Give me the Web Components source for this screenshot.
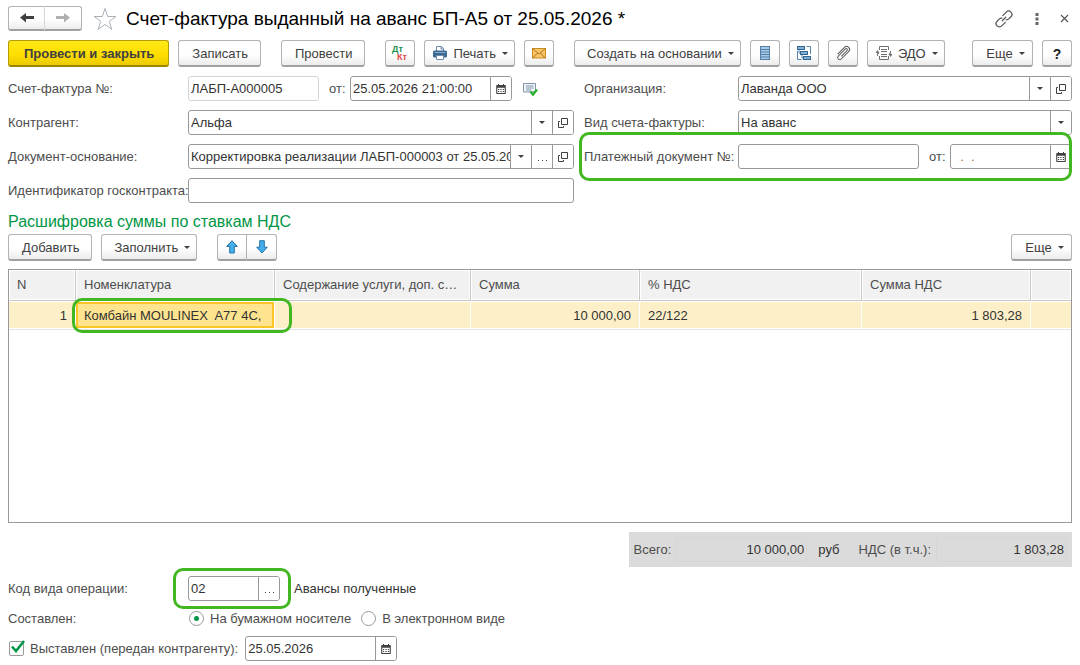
<!DOCTYPE html>
<html lang="ru">
<head>
<meta charset="utf-8">
<meta name="viewport" content="width=device-width, initial-scale=1">
<title>Счет-фактура выданный на аванс</title>
<style>
  * { box-sizing: border-box; }
  body {
    margin: 0;
    padding: 6px 8px 4px;
    min-height: 100vh;
    display: flex;
    flex-direction: column;
    gap: 9px;
    background: #fff;
    color: #4d4d4d;
    font: 13px/16px "Liberation Sans", Arial, sans-serif;
  }
  .row { display: flex; align-items: center; gap: 9px; }
  .pair { display: flex; }
  .push { margin-left: auto; }
  .group { margin-left: 11px; }
  .columns { display: grid; grid-template-columns: 566fr 488fr; gap: 10px; align-items: start; }
  .column { display: flex; flex-direction: column; gap: 9px; }
  .fields { display: flex; align-items: center; gap: 10px; }
  .grow { flex: 1; }
  .left { --label: 180px; }
  .right { --label: 154px; }
  .short { --label: 21px; }
  h2 { margin: 0 0 -7px; font-size: 16px; line-height: 20px; font-weight: normal; color: #009646; }
  .dark { color: #333; }
  totals-bar { align-self: flex-end; }
</style>
</head>
<body>
  <window-title>Счет-фактура выданный на аванс БП-А5 от 25.05.2026 *</window-title>

  <div class="row">
    <ui-button kind="primary">Провести и закрыть</ui-button>
    <ui-button>Записать</ui-button>
    <ui-button class="group">Провести</ui-button>
    <ui-button class="group" icon="dtkt" kind="square" hint="Дт/Кт"></ui-button>
    <ui-button icon="print" menu>Печать</ui-button>
    <ui-button icon="mail" kind="square" hint="Отправить"></ui-button>
    <ui-button class="group" menu>Создать на основании</ui-button>
    <ui-button icon="list" kind="square" hint="Список"></ui-button>
    <ui-button icon="tree" kind="square" hint="Структура"></ui-button>
    <ui-button icon="clip" kind="square" hint="Файлы"></ui-button>
    <ui-button icon="edo" menu>ЭДО</ui-button>
    <ui-button class="push" menu>Еще</ui-button>
    <ui-button kind="square help">?</ui-button>
  </div>

  <div class="columns">
    <div class="column left">
      <div class="fields">
        <ui-field label="Счет-фактура №:" value="ЛАБП-А000005" size="131" readonly></ui-field>
        <ui-field class="short" label="от:" value="25.05.2026 21:00:00" size="162" buttons="calendar"></ui-field>
        <ui-icon name="status"></ui-icon>
      </div>
      <ui-field label="Контрагент:" value="Альфа" buttons="drop open"></ui-field>
      <ui-field label="Документ-основание:" value="Корректировка реализации ЛАБП-000003 от 25.05.20" buttons="drop dots open"></ui-field>
      <ui-field label="Идентификатор госконтракта:"></ui-field>
    </div>
    <div class="column right">
      <ui-field label="Организация:" value="Лаванда ООО" buttons="drop open"></ui-field>
      <ui-field label="Вид счета-фактуры:" value="На аванс" buttons="drop"></ui-field>
      <mark-ring style="--inset: -12px 0 -12px -5px">
        <div class="fields">
          <ui-field class="grow" label="Платежный документ №:"></ui-field>
          <ui-field class="short" label="от:" value="  .  .    " size="122" buttons="calendar" mask></ui-field>
        </div>
      </mark-ring>
    </div>
  </div>

  <h2>Расшифровка суммы по ставкам НДС</h2>
  <div class="row">
    <ui-button>Добавить</ui-button>
    <ui-button menu>Заполнить</ui-button>
    <div class="pair group">
      <ui-button icon="up" kind="square first" hint="Вверх"></ui-button>
      <ui-button icon="down" kind="square last" hint="Вниз"></ui-button>
    </div>
    <ui-button class="push" menu>Еще</ui-button>
  </div>

  <vat-table></vat-table>
  <totals-bar></totals-bar>

  <div class="fields left">
    <operation-code label="Код вида операции:"></operation-code>
    <span class="dark">Авансы полученные</span>
  </div>
  <choice-group label="Составлен:"></choice-group>
  <div class="fields">
    <check-box>Выставлен (передан контрагенту):</check-box>
    <ui-field value="25.05.2026" size="152" buttons="calendar" hint="Дата выставления"></ui-field>
  </div>

<script>
const ICONS = {
  back: [16, 12, '<path d="M7 1v3h8v3H7v3.500L1 5.500z" fill="#404040"/>'],
  forward: [16, 12, '<path d="M9 1v3H1v3h8v3.500l6-5z" fill="#b0b0b0"/>'],
  star: [24, 24, '<path d="M12 1.500l2.700 8h8.100l-6.500 4.900 2.500 7.900-6.800-4.800-6.800 4.800 2.500-7.900L1.200 9.500h8.100z" fill="none" stroke="#a9b0b8"/>'],
  link: [18, 16, '<g transform="rotate(-45 8 8)" fill="none" stroke="#555" stroke-width="1.200" stroke-linecap="round"><path d="M6.500 11.300H1.500a3.300 3.300 0 0 1 0-6.600h3a3.300 3.300 0 0 1 2.500 1.200"/><path d="M9.500 4.700h5a3.300 3.300 0 0 1 0 6.600h-3a3.300 3.300 0 0 1-2.500-1.200"/><path d="M5.500 8h5"/></g>'],
  more: [4, 12, '<path d="M.5 0h3v3h-3zM.5 4.500h3v3h-3zM.5 9h3v3h-3z" fill="#666"/>'],
  close: [9, 9, '<path d="M1 1l7 7M8 1L1 8" stroke="#555" stroke-width="1.200"/>'],
  dtkt: [18, 18, '<g font-family="Liberation Sans" font-size="9" font-weight="bold"><text x="1" y="8" fill="#1c9150">Дт</text><text x="6" y="16" fill="#e5484d">Кт</text></g>'],
  print: [14, 14, '<path d="M3.500 5V.5h5L10.500 2.500V5" fill="#fff" stroke="#6f8ba8"/><path d="M8 .5v2.500h2.500" fill="none" stroke="#6f8ba8"/><rect y="4.500" width="14" height="7" rx="1.500" fill="#3d6a95"/><path d="M1.500 6.500h11" stroke="#86a9c8"/><path d="M3.500 9.500h7v4h-7z" fill="#fff" stroke="#6f8ba8"/>'],
  mail: [14, 12, '<rect x=".5" y="1.500" width="13" height="9.500" fill="#f6c469" stroke="#c98a22"/><path d="M1 2l6 5 6-5M1 11l4.500-5M13 11L8.500 6" fill="none" stroke="#b97816"/>'],
  list: [10, 14, '<rect x=".5" y=".5" width="9" height="13" fill="#a9cbe6" stroke="#537fa6"/><path d="M1 3.500h8M1 6h8M1 8.500h8M1 11h8" stroke="#537fa6"/>'],
  tree: [14, 14, '<g fill="#7fb0d8" stroke="#34658f"><rect x=".5" y=".5" width="7" height="3"/><rect x="3.500" y="5.500" width="7" height="3"/><rect x="6.500" y="10.500" width="7" height="3"/></g><path d="M9.500.5h4V8M.5 5v8.500h4M2 4v3h1M5 9v3h1" fill="none" stroke="#5685ad"/>'],
  clip: [14, 14, '<path transform="rotate(-45 7 7)" d="M2.500 4H12a3 3 0 0 1 0 6H1.500a2.100 2.100 0 0 1 0-4.200H11.500a1.200 1.200 0 0 1 0 2.400H3.500" fill="none" stroke="#5a5a5a"/>'],
  edo: [16, 14, '<g fill="none" stroke="#707070"><path d="M3.500 4V.5h9V4M3.500 10v3.500h9V10"/><path d="M5 3.500h6M5 5.500h6M5 8.500h6M5 10.500h6"/><path d="M3 7.500H1.500V10M13 7.500h1.500V5"/></g><path d="M-.5 7L1.500 4l2 3zM12.500 8l2 3 2-3z" fill="#707070"/>'],
  up: [12, 14, '<path d="M6 .7L11.300 6.500H8.300v6.500H3.700V6.500H.7z" fill="#45aeea" stroke="#2173a8"/>'],
  down: [12, 14, '<path d="M6 13L11.300 7.200H8.300V.7H3.700v6.500H.7z" fill="#45aeea" stroke="#2173a8"/>'],
  status: [16, 14, '<path d="M1.500 1.500h12v8.500h-12z" fill="#eef4fa" stroke="#8493a8"/><path d="M4 4h7.500M4 6h7.500M4 8h5" stroke="#8493a8"/><path d="M8.500 9.500l2.500 3 4-5" fill="none" stroke="#2eb135" stroke-width="2.500"/>'],
  calendar: [10, 10, '<path d="M1 1h8a.8.8 0 0 1 .8.8V9.200a.8.8 0 0 1-.8.8H1a.8.8 0 0 1-.8-.8V1.800A.8.8 0 0 1 1 1zM1.300 3.800V9h7.400V3.800z" fill="#404040" fill-rule="evenodd"/><path d="M2.500 0v2M7.500 0v2" stroke="#404040"/><path d="M2 5.500h1.200m1.200 0h1.200m1.200 0H8M2 7.500h1.200m1.200 0h1.200m1.200 0H8" stroke="#404040"/>'],
  open: [10, 10, '<path d="M3.500.5h6v6h-6zM2 3.500H.5v6h5V8" fill="none" stroke="#404040"/>'],
  drop: [6, 3, '<path d="M0 0h6L3 3z" fill="#404040"/>'],
  dots: [9, 10, '<path d="M0 8h1v1H0zM4 8h1v1H4zM8 8h1v1H8z" fill="#404040"/>']
};

const HINTS = { calendar: "Выбрать дату", open: "Открыть", drop: "Выбрать из списка", dots: "Показать все" };

// shared by everything that draws a text box with its inner buttons
const FIELD_STYLE = `
  * { box-sizing: border-box; }
  .box {
    display: flex;
    flex: 1;
    min-width: 0;
    height: 25px;
    border: 1px solid #999;
    border-radius: 3px;
    background: #fff;
    overflow: hidden;
  }
  .box.readonly { border-color: #d4d4d4; }
  input {
    flex: 1;
    min-width: 0;
    width: 100%;
    border: 0;
    outline: 0;
    padding: 0 0 0 2px;
    background: transparent;
    color: #333;
    font: inherit;
  }
  .box button {
    flex: none;
    width: 21px;
    padding: 0;
    border: 0;
    border-left: 1px solid #999;
    background: #fff;
    display: flex;
    align-items: center;
    justify-content: center;
  }
`;

function fieldButtons(names) {
  return names.split(" ").filter(Boolean).map((name) =>
    `<button type="button" aria-label="${HINTS[name]}"><ui-icon name="${name}"></ui-icon></button>`).join("");
}

class UiIcon extends HTMLElement {
  constructor() {
    super();
    this.attachShadow({ mode: "open" });
  }
  connectedCallback() {
    const [w, h, body] = ICONS[this.getAttribute("name")];
    this.shadowRoot.innerHTML = `
      <style>
        :host { display: inline-flex; flex: none; }
        svg { display: block; overflow: visible; }
      </style>
      <svg width="${w}" height="${h}" viewBox="0 0 ${w} ${h}" aria-hidden="true">${body}</svg>
    `;
  }
}
customElements.define("ui-icon", UiIcon);

class UiButton extends HTMLElement {
  constructor() {
    super();
    this.attachShadow({ mode: "open" });
  }
  connectedCallback() {
    const icon = this.getAttribute("icon");
    const hint = this.getAttribute("hint");
    const menu = this.hasAttribute("menu");
    this.shadowRoot.innerHTML = `
      <style>
        :host { display: block; flex: none; }
        button {
          box-sizing: border-box;
          display: flex;
          align-items: center;
          justify-content: center;
          gap: 6px;
          height: 27px;
          padding: 0 12px 0 13px;
          border: 1px solid #b3b3b3;
          border-bottom: 2px solid #a0a0a0;
          border-radius: 3px;
          background: linear-gradient(#fff 55%, #ececec);
          color: #404040;
          font: inherit;
          white-space: nowrap;
        }
        span { padding-top: 2px; }
        .menu { min-width: 61px; padding: 0 6px 0 12px; }
        .icon { padding-left: 8px; }
        .square { width: 30px; padding: 0; }
        .nav { width: 37px; height: 25px; padding: 0; }
        .help { font-weight: bold; font-size: 14px; color: #222; }
        .first { border-radius: 3px 0 0 3px; }
        .last { border-radius: 0 3px 3px 0; border-left: 0; }
        .nav.first { border-right-color: #d5d5d5; }
        .primary {
          padding: 0 14px 0 15px;
          border-color: #b39b00;
          border-bottom-color: #9c8600;
          background: linear-gradient(#ffe817, #ffde00 55%, #eccb00);
          font-weight: bold;
        }
      </style>
      <button type="button" class="${this.getAttribute("kind") || ""} ${menu ? "menu" : ""} ${icon && !hint ? "icon" : ""}" ${hint ? `aria-label="${hint}"` : ""}>
        ${icon ? `<ui-icon name="${icon}"></ui-icon>` : ""}
        ${hint ? "" : "<span><slot></slot></span>"}
        ${menu ? `<ui-icon name="drop"></ui-icon>` : ""}
      </button>
    `;
  }
}
customElements.define("ui-button", UiButton);

class WindowTitle extends HTMLElement {
  constructor() {
    super();
    this.attachShadow({ mode: "open" });
  }
  connectedCallback() {
    this.shadowRoot.innerHTML = `
      <style>
        :host { display: flex; align-items: center; height: 25px; }
        .nav { display: flex; }
        h1 { margin: 0 auto 0 9px; font-size: 19px; line-height: 24px; font-weight: normal; color: #000; white-space: nowrap; }
        .plain { display: flex; padding: 0; border: 0; background: none; }
        .star { margin-left: 11px; }
        .tools { display: flex; align-items: center; gap: 21px; padding-right: 3px; }
      </style>
      <div class="nav">
        <ui-button icon="back" kind="nav first" hint="Назад"></ui-button>
        <ui-button icon="forward" kind="nav last" hint="Вперед"></ui-button>
      </div>
      <button type="button" class="plain star" aria-label="В избранное"><ui-icon name="star"></ui-icon></button>
      <h1><slot></slot></h1>
      <div class="tools">
        <button type="button" class="plain" aria-label="Ссылка"><ui-icon name="link"></ui-icon></button>
        <button type="button" class="plain" aria-label="Меню"><ui-icon name="more"></ui-icon></button>
        <button type="button" class="plain" aria-label="Закрыть"><ui-icon name="close"></ui-icon></button>
      </div>
    `;
  }
}
customElements.define("window-title", WindowTitle);

class UiField extends HTMLElement {
  constructor() {
    super();
    this.attachShadow({ mode: "open" });
  }
  connectedCallback() {
    const label = this.getAttribute("label");
    const size = this.getAttribute("size");
    const hint = this.getAttribute("hint");
    const readonly = this.hasAttribute("readonly");
    this.shadowRoot.innerHTML = `
      <style>
        ${FIELD_STYLE}
        :host { display: flex; align-items: center; }
        label { flex: none; width: var(--label); white-space: nowrap; }
        .sized { flex: none; width: ${size}px; }
        .mask { color: #a0703a; }
      </style>
      ${label ? `<label for="value">${label}</label>` : ""}
      <div class="box ${size ? "sized" : ""} ${readonly ? "readonly" : ""}">
        <input id="value" type="text" class="${this.hasAttribute("mask") ? "mask" : ""}" ${readonly ? "readonly" : ""} ${hint ? `aria-label="${hint}"` : ""}>
        ${fieldButtons(this.getAttribute("buttons") || "")}
      </div>
    `;
    this.shadowRoot.querySelector("input").value = this.getAttribute("value") || "";
  }
}
customElements.define("ui-field", UiField);

// green frame drawn over whatever is slotted in
class MarkRing extends HTMLElement {
  constructor() {
    super();
    this.attachShadow({ mode: "open" });
  }
  connectedCallback() {
    this.shadowRoot.innerHTML = `
      <style>
        :host { display: block; position: relative; }
        div {
          position: absolute;
          inset: var(--inset);
          z-index: 1;
          border: 3px solid #43b721;
          border-radius: 10px;
          pointer-events: none;
        }
      </style>
      <slot></slot>
      <div></div>
    `;
  }
}
customElements.define("mark-ring", MarkRing);

class OperationCode extends HTMLElement {
  constructor() {
    super();
    this.attachShadow({ mode: "open" });
  }
  connectedCallback() {
    this.shadowRoot.innerHTML = `
      <style>
        ${FIELD_STYLE}
        :host { display: flex; align-items: center; margin-right: 4px; }
        label { width: var(--label); }
        mark-ring { width: 92px; --inset: -8px -11px -8px -15px; }
      </style>
      <label for="code">${this.getAttribute("label")}</label>
      <mark-ring>
        <div class="box">
          <input id="code" type="text" value="02">
          ${fieldButtons("dots")}
        </div>
      </mark-ring>
    `;
  }
}
customElements.define("operation-code", OperationCode);

class VatTable extends HTMLElement {
  constructor() {
    super();
    this.attachShadow({ mode: "open" });
  }
  connectedCallback() {
    const columns = [["N", 67], ["Номенклатура", 199], ["Содержание услуги, доп. с…", 196], ["Сумма", 169], ["% НДС", 222], ["Сумма НДС", 169], ["", 40]];
    this.shadowRoot.innerHTML = `
      <style>
        :host { display: block; box-sizing: border-box; flex: 1 0 200px; margin-top: -1px; border: 1px solid #999; background: #fff; }
        table { width: 100%; table-layout: fixed; border-collapse: separate; border-spacing: 0; border-bottom: 1px solid #e3e3ea; }
        th, td { box-sizing: border-box; border: 1px solid #fff; white-space: nowrap; }
        th {
          height: 31px;
          padding: 0 7px 2px;
          border-right-color: #c6c6c6;
          border-bottom-color: #c6c6c6;
          background: #f1f1f1;
          box-shadow: inset -1px -1px #fff;
          font-weight: normal;
          text-align: left;
        }
        th:last-child, td:last-child { border-right: 0; }
        td { height: 28px; padding: 2px 8px 0; border-left: 0; background: #fdf0c8; color: #333; }
        .num { text-align: right; }
        .active { padding: 0; }
        mark-ring { --inset: -4px -18px -5px -4px; }
        .cell { box-sizing: border-box; height: 26px; padding: 0 6px; border: 2px solid #fac525; background: #ffe48f; line-height: 24px; white-space: pre; }
      </style>
      <table>
        <colgroup>${columns.map(([, w]) => `<col style="width: ${w}px">`).join("")}</colgroup>
        <thead><tr>${columns.map(([name]) => `<th scope="col">${name}</th>`).join("")}</tr></thead>
        <tbody>
          <tr>
            <td class="num">1</td>
            <td class="active"><mark-ring><div class="cell">Комбайн MOULINEX  A77 4С,</div></mark-ring></td>
            <td></td>
            <td class="num">10 000,00</td>
            <td>22/122</td>
            <td class="num">1 803,28</td>
            <td></td>
          </tr>
        </tbody>
      </table>
    `;
  }
}
customElements.define("vat-table", VatTable);

class TotalsBar extends HTMLElement {
  constructor() {
    super();
    this.attachShadow({ mode: "open" });
  }
  connectedCallback() {
    this.shadowRoot.innerHTML = `
      <style>
        * { box-sizing: border-box; }
        :host { display: flex; align-items: center; gap: 5px; padding: 5px; background: #dbdbdb; }
        input {
          width: 131px;
          height: 25px;
          padding: 0 2px;
          border: 1px solid #d6d6d6;
          border-radius: 3px;
          background: transparent;
          color: #333;
          font: inherit;
          text-align: right;
        }
        span { margin: 0 14px 0 6px; color: #333; }
      </style>
      <label for="total">Всего:</label>
      <input id="total" type="text" value="10 000,00" readonly>
      <span>руб</span>
      <label for="vat">НДС (в т.ч.):</label>
      <input id="vat" type="text" value="1 803,28" readonly>
    `;
  }
}
customElements.define("totals-bar", TotalsBar);

class ChoiceGroup extends HTMLElement {
  constructor() {
    super();
    this.attachShadow({ mode: "open" });
  }
  connectedCallback() {
    this.shadowRoot.innerHTML = `
      <style>
        :host { display: block; }
        div { display: flex; align-items: center; height: 17px; }
        .name { width: 181px; }
        label { display: flex; align-items: center; gap: 6px; margin-right: 10px; }
        input {
          appearance: none;
          box-sizing: border-box;
          width: 15px;
          height: 15px;
          margin: 0;
          border: 1px solid #999;
          border-radius: 50%;
          background: #fff;
        }
        input:checked { background: radial-gradient(circle, #009646 0 2px, #fff 3px); }
      </style>
      <div role="radiogroup" aria-labelledby="name">
        <span class="name" id="name">${this.getAttribute("label")}</span>
        <label><input type="radio" name="form" checked>На бумажном носителе</label>
        <label><input type="radio" name="form">В электронном виде</label>
      </div>
    `;
  }
}
customElements.define("choice-group", ChoiceGroup);

class CheckBox extends HTMLElement {
  constructor() {
    super();
    this.attachShadow({ mode: "open" });
  }
  connectedCallback() {
    this.shadowRoot.innerHTML = `
      <style>
        :host { display: block; margin-right: -3px; }
        label { display: flex; align-items: center; gap: 6px; padding-left: 1px; }
        .tick { position: relative; display: flex; }
        input { appearance: none; box-sizing: border-box; width: 15px; height: 15px; margin: 0; border: 1px solid #999; border-radius: 2px; background: #fff; }
        svg { position: absolute; left: 2px; bottom: 3px; display: none; pointer-events: none; }
        input:checked + svg { display: block; }
      </style>
      <label>
        <span class="tick">
          <input type="checkbox" checked>
          <svg width="14" height="13" viewBox="0 0 14 13" aria-hidden="true"><path d="M1 6.500l4 4.500L13 1" fill="none" stroke="#009646" stroke-width="2.500"/></svg>
        </span>
        <span><slot></slot></span>
      </label>
    `;
  }
}
customElements.define("check-box", CheckBox);
</script>
</body>
</html>
